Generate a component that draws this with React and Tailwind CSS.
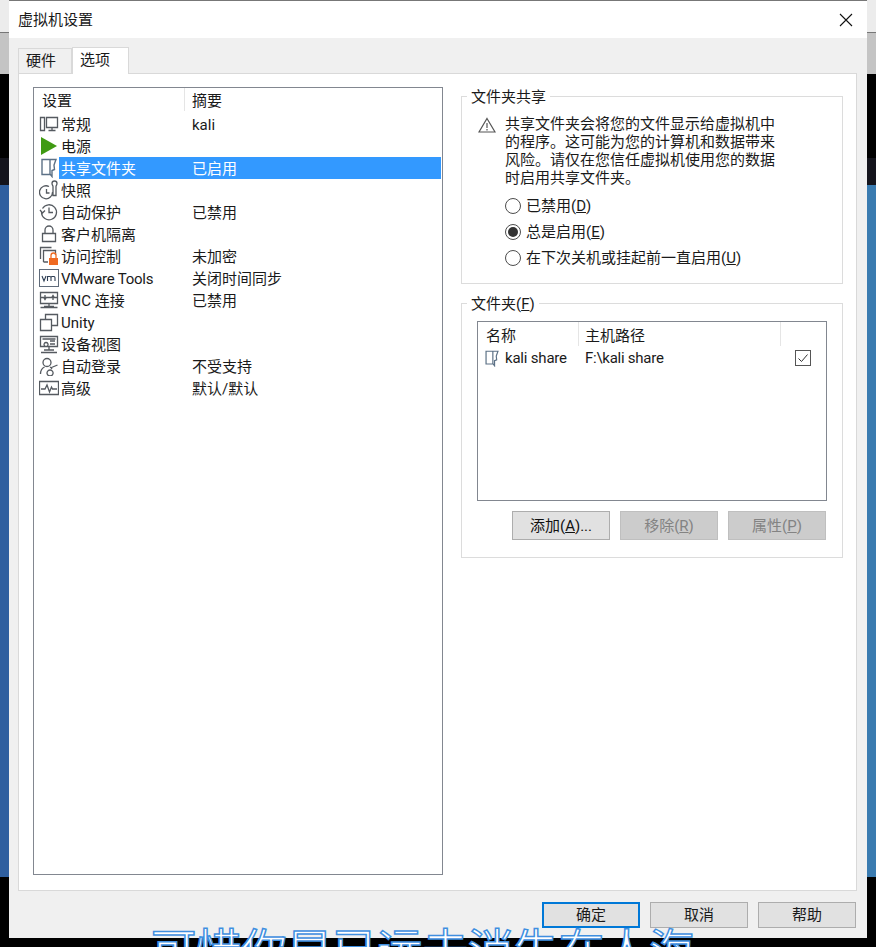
const rows = [
  { icon: "general", name: "常规", value: "kali" },
  { icon: "power", name: "电源", value: "" },
  { icon: "share", name: "共享文件夹", value: "已启用", selected: true },
  { icon: "snapshot", name: "快照", value: "" },
  { icon: "autosave", name: "自动保护", value: "已禁用" },
  { icon: "lock", name: "客户机隔离", value: "" },
  { icon: "access", name: "访问控制", value: "未加密" },
  { icon: "vm", name: "VMware Tools", value: "关闭时间同步", tight: true },
  { icon: "vnc", name: "VNC 连接", value: "已禁用" },
  { icon: "unity", name: "Unity", value: "" },
  { icon: "device", name: "设备视图", value: "" },
  { icon: "login", name: "自动登录", value: "不受支持" },
  { icon: "advanced", name: "高级", value: "默认/默认" },
];

const line = { fill: "none", stroke: "#555a60", strokeWidth: 1.3 };

function ShareIcon({ className }) {
  return (
    <svg viewBox="0 0 16 20" className={className}>
      <path d="M1 1.500h8v15H1zM9 1.500h6l-2 5.500 .5 4.500-2.500 1v6l-2-2.500" fill="none" stroke="#5c7186" strokeWidth="1.4" />
    </svg>
  );
}

function RowIcon({ name }) {
  const cls = "w-[20px] h-[20px]";
  if (name === "power")
    return (
      <svg viewBox="0 0 20 20" className={cls}>
        <path d="M2 1l16 9-16 9z" fill="#3f9a12" />
      </svg>
    );
  if (name === "share") return <ShareIcon className="w-[16px] h-[20px] ml-[2px]" />;
  if (name === "vm")
    return (
      <svg viewBox="0 0 20 20" className={cls}>
        <rect x="0.5" y="1.5" width="19" height="17" fill="#fff" stroke="#5f6b7a" />
        <path d="M3 8l2 5 2-5M8.500 13V8.500h2.500c1 0 1 1 1 1V13M12 9.500s.2-1 1.200-1h1.600c1 0 1.200 1 1.200 1V13" fill="none" stroke="#2f3f55" strokeWidth="1.1" />
      </svg>
    );
  return (
    <svg viewBox="0 0 20 20" className={cls}>
      {name === "general" && <path d="M1.500 3.500h4v13h-4zM7.500 3.500h11v10h-11zM13 13.500v3M9.500 16.500h7" {...line} />}
      {name === "snapshot" && <path d="M10 6.500a6.500 6.500 0 1 0 3.500 5.500M7.500 9v4h3M13 3.500a2.500 2.500 0 0 1 5 0c0 1.500-1 2-1 3v9h-3v-9c0-1-1-1.500-1-3z" {...line} />}
      {name === "autosave" && <path d="M3.500 6.500a7.500 7.500 0 1 1-1 4M1 8l2.500 3L6 8.500M10 5.500v5h4" {...line} />}
      {name === "lock" && <path d="M3.500 9.500h13v8h-13zM6 9.500V6a4 4 0 0 1 8 0v3.500" {...line} />}
      {name === "access" && (
        <>
          <path d="M1.500 13V1.500h11M4.500 16V4.500h12V9M4.500 16H9" {...line} />
          <rect x="10" y="12" width="9" height="7" fill="#ef6a22" />
          <path d="M12 12V9.500a2.500 2.500 0 0 1 5 0V12" fill="none" stroke="#ef6a22" strokeWidth="1.3" />
        </>
      )}
      {name === "vnc" && <path d="M1.500 2.500h17v11h-17zM1.500 7.500h17M5 16.500h10M10 13.500v3M6 5v5M5 8l1 1.500L7 8M14 10V5M13 7l1-1.500L15 7M1.500 17.500h17" {...line} />}
      {name === "unity" && <path d="M1.500 7.500h11v11h-11zM6.500 7.500v-5h12v11h-6" {...line} />}
      {name === "device" && <path d="M1.500 2.500h17v10h-17zM3.500 5h13M5 16h10M2 18.500h16M7 8.500a2 2 0 1 0 .1 0zM11 7h5M11 10h5M10 12.500v3" {...line} />}
      {name === "login" && <path d="M8 2.500a4 4 0 0 1 0 8 4 4 0 0 1 0-8zM1.500 18c0-4 2-6 4-7M11 11c1 .6 1.500 1 2 2M11 14a3 3 0 1 0 .1 0zM12.500 11.500l6-2.500" {...line} />}
      {name === "advanced" && <path d="M.5 3.500h19v13H.5zM2 11h4l2-4 2.500 7 2-5 1 2H18" {...line} />}
    </svg>
  );
}

function Key({ children }) {
  return <span className="underline">{children}</span>;
}

function Radio({ checked, children }) {
  return (
    <div className="flex items-center h-[26px]">
      <div className="w-[16px] h-[16px] rounded-full border border-[#4d4d4d] bg-white flex items-center justify-center">
        {checked && <div className="w-[10px] h-[10px] rounded-full bg-[#333]" />}
      </div>
      <span className="ml-[5px]">{children}</span>
    </div>
  );
}

function FormButton({ disabled, children }) {
  return (
    <div
      className={`w-[98px] h-[29px] flex items-center justify-center border ${
        disabled
          ? "bg-[#cccccc] border-[#bfbfbf] text-[#838383]"
          : "bg-[#e1e1e1] border-[#adadad] text-[#111]"
      }`}
    >
      {children}
    </div>
  );
}

function FooterButton({ primary, children }) {
  return (
    <div
      className={`w-[98px] h-[26px] flex items-center justify-center bg-[#e1e1e1] ${
        primary ? "border-2 border-[#0078d7]" : "border border-[#adadad]"
      }`}
    >
      {children}
    </div>
  );
}

function SideStrip({ blue }) {
  return (
    <div className="w-[9px] flex flex-col shrink-0">
      <div className="h-[33px] bg-[#ececec] border-b border-[#777]" />
      <div className="h-[41px] bg-[#c4c4c4]" />
      <div className="h-[84px] bg-black" />
      <div className="h-[27px] bg-[#14141c]" />
      <div className={`h-[692px] ${blue}`} />
    </div>
  );
}

export default function App() {
  return (
    <div className="relative w-[876px] h-[947px] overflow-hidden bg-black flex items-start text-[15px] leading-[18px] text-[#1a1a1a] font-['Roboto','Noto_Sans_CJK_SC',sans-serif]">
      <SideStrip blue="bg-[#2f5f9f]" />

      {/* dialog */}
      <div className="w-[858px] h-[938px] shrink-0 flex flex-col bg-[#f0f0f0] border-t border-[#777]">
        <div className="h-[37px] bg-white flex items-center justify-between pl-[9px] pr-[14px] shrink-0">
          <span>虚拟机设置</span>
          <svg viewBox="0 0 14 14" className="w-[14px] h-[14px]">
            <path d="M1 1l12 12M13 1L1 13" stroke="#111" strokeWidth="1.1" fill="none" />
          </svg>
        </div>

        {/* tabs */}
        <div className="h-[35px] flex items-end pl-[9px] shrink-0">
          <div className="w-[54px] h-[25px] flex items-center pl-[7px] border border-b-0 border-[#d9d9d9] bg-[#f0f0f0]">硬件</div>
          <div className="w-[57px] h-[27px] -mb-px relative flex items-center pl-[7px] pb-[2px] border border-b-0 border-[#d9d9d9] bg-white">选项</div>
        </div>

        <div className="mx-[9px] w-[839px] h-[818px] shrink-0 bg-white border border-[#d9d9d9] flex pl-[14px] pt-[13px]">
          {/* settings list */}
          <div className="w-[410px] h-[788px] shrink-0 border border-[#828790] bg-white">
            <div className="h-[25px] flex">
              <div className="w-[151px] h-[23px] pl-[8px] pt-[2px] flex items-center border-r border-[#e5e5e5]">设置</div>
              <div className="pl-[7px] h-[23px] pt-[2px] flex items-center">摘要</div>
            </div>
            {rows.map((row) => (
              <div key={row.name} className="h-[22px] flex items-center pl-[5px] pr-[1px]">
                <div className="w-[20px] shrink-0 flex items-center justify-start">
                  <RowIcon name={row.icon} />
                </div>
                <div className={`flex-1 h-[22px] pt-[1px] flex items-center ${row.selected ? "bg-[#3399ff] text-white" : ""}`}>
                  <span className={`w-[133px] pl-[2px] shrink-0 whitespace-nowrap ${row.tight ? "tracking-[-0.25px]" : ""}`}>{row.name}</span>
                  <span className="whitespace-nowrap">{row.value}</span>
                </div>
              </div>
            ))}
          </div>

          {/* right column */}
          <div className="w-[382px] ml-[18px] flex flex-col">
            <div className="h-[188px] mt-[9px] border border-[#dcdcdc] relative pl-[16px] pt-[18px]">
              <span className="absolute left-[5px] -top-[9px] bg-white px-[4px]">文件夹共享</span>
              <div className="flex">
                <svg viewBox="0 0 18 16" className="w-[18px] h-[16px] mt-[2px] shrink-0">
                  <path d="M9 1.500L17 15H1zM9 6v5M9 12v1.500" fill="none" stroke="#555" strokeWidth="1.2" />
                </svg>
                <div className="ml-[9px] w-[290px] flex flex-col">
                  <p>共享文件夹会将您的文件显示给虚拟机中</p>
                  <p>的程序。这可能为您的计算机和数据带来</p>
                  <p>风险。请仅在您信任虚拟机使用您的数据</p>
                  <p>时启用共享文件夹。</p>
                  <div className="mt-[6px] flex flex-col">
                    <Radio>已禁用(<Key>D</Key>)</Radio>
                    <Radio checked>总是启用(<Key>E</Key>)</Radio>
                    <Radio>在下次关机或挂起前一直启用(<Key>U</Key>)</Radio>
                  </div>
                </div>
              </div>
            </div>

            <div className="h-[255px] mt-[19px] border border-[#dcdcdc] relative pl-[15px] pt-[17px]">
              <span className="absolute left-[5px] -top-[9px] bg-white px-[4px]">文件夹(<Key>F</Key>)</span>
              <div className="w-[350px] h-[180px] border border-[#828790] bg-white">
                <div className="h-[24px] flex">
                  <div className="w-[101px] pl-[8px] pt-[4px] flex items-center border-r border-[#e5e5e5]">名称</div>
                  <div className="w-[202px] pl-[6px] pt-[4px] flex items-center border-r border-[#e5e5e5]">主机路径</div>
                </div>
                <div className="h-[24px] flex items-center">
                  <div className="w-[102px] pl-[7px] flex items-center whitespace-nowrap tracking-[-0.2px]">
                    <ShareIcon className="w-[14px] h-[17px] shrink-0" />
                    <span className="ml-[6px]">kali share</span>
                  </div>
                  <span className="w-[215px] pl-[5px] whitespace-nowrap tracking-[-0.25px]">F:\kali share</span>
                  <div className="w-[16px] h-[16px] border border-[#555] flex items-center justify-center">
                    <svg viewBox="0 0 12 12" className="w-[12px] h-[12px]">
                      <path d="M1.500 6.500l3 3 6-7" fill="none" stroke="#333" strokeWidth="1" />
                    </svg>
                  </div>
                </div>
              </div>
              <div className="flex gap-[10px] mt-[10px] ml-[35px]">
                <FormButton>添加(<Key>A</Key>)...</FormButton>
                <FormButton disabled>移除(<Key>R</Key>)</FormButton>
                <FormButton disabled>属性(<Key>P</Key>)</FormButton>
              </div>
            </div>
          </div>
        </div>

        <div className="flex justify-end gap-[10px] pr-[11px] mt-[11px]">
          <FooterButton primary>确定</FooterButton>
          <FooterButton>取消</FooterButton>
          <FooterButton>帮助</FooterButton>
        </div>
      </div>

      <SideStrip blue="bg-[#3a7bb0]" />

      {/* video subtitle that sits over the dialog */}
      <div className="absolute left-[151px] top-[919px] whitespace-nowrap text-[45.3px] leading-[56px] text-white font-['Noto_Sans_CJK_SC',sans-serif] [-webkit-text-stroke:1.5px_#3f8fe0]">
        可惜你早已远去消失在人海
      </div>
    </div>
  );
}
